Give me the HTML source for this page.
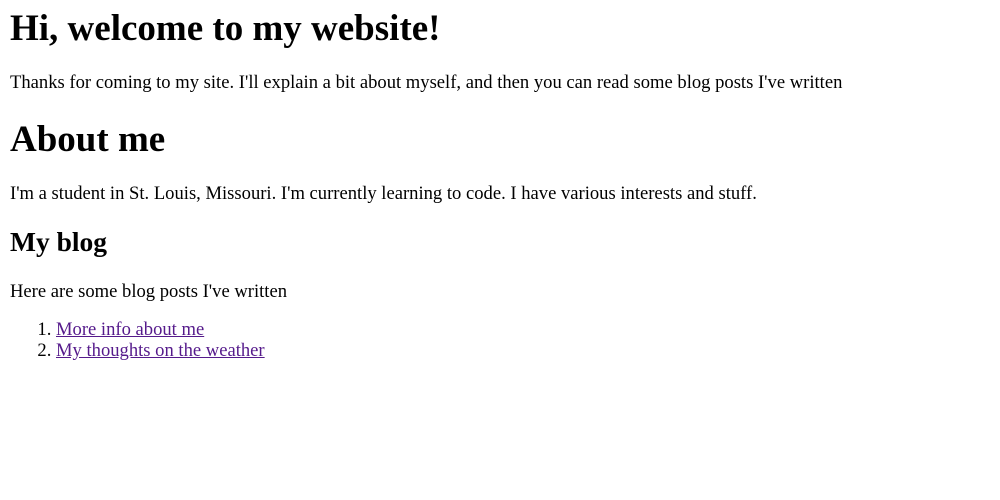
<!DOCTYPE html>
<html><head><style>
body{margin:8px 10px;font-family:"Liberation Serif",serif;font-size:18.6px;color:#000;background:#fff}
h1{font-size:37px;margin:26px 0 23px;line-height:41px}
h1:first-child{margin-top:0}
h2{font-size:27.5px;margin:22px 0 24px;line-height:31px}
p{margin:17px 0;line-height:21px}
ol{padding-left:46px;margin:17px 0;line-height:21px}
a{color:#551a8b}
</style></head><body>
<h1>Hi, welcome to my website!</h1>
<p>Thanks for coming to my site. I'll explain a bit about myself, and then you can read some blog posts I've written</p>
<h1>About me</h1>
<p>I'm a student in St. Louis, Missouri. I'm currently learning to code. I have various interests and stuff.</p>
<h2>My blog</h2>
<p>Here are some blog posts I've written</p>
<ol>
<li><a href="#">More info about me</a></li>
<li><a href="#">My thoughts on the weather</a></li>
</ol>
</body></html>
